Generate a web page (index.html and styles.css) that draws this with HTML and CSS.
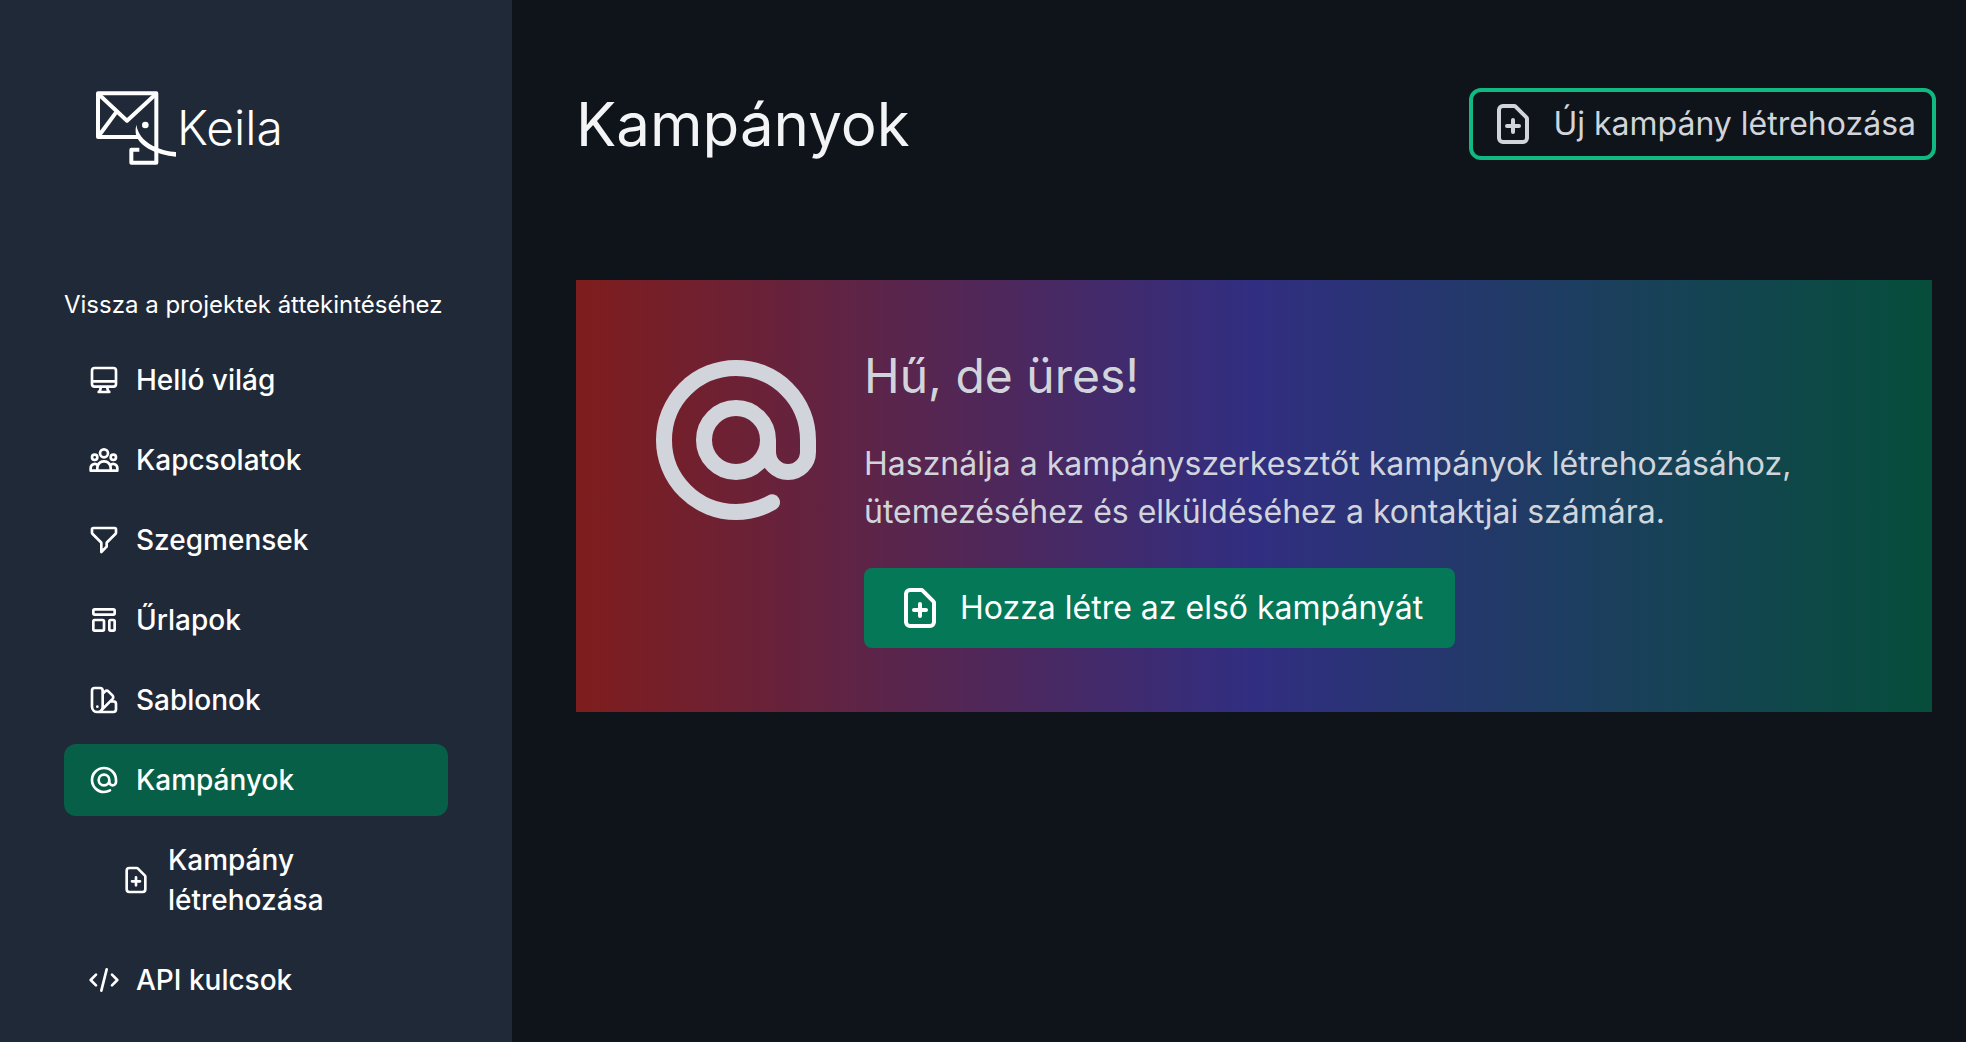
FILE: index.html
```html
<!DOCTYPE html>
<html lang="hu">
<head>
<meta charset="utf-8">
<title>Kampányok – Keila</title>
<link rel="stylesheet" href="styles.css">
</head>
<body>
<svg class="sprite" aria-hidden="true">
  <symbol id="file-plus" viewBox="0 0 24 24"><path d="M9 13h6m-3-3v6m5 5H7a2 2 0 0 1-2-2V5a2 2 0 0 1 2-2h5.586a1 1 0 0 1 .707.293l5.414 5.414a1 1 0 0 1 .293.707V19a2 2 0 0 1-2 2z"/></symbol>
  <symbol id="at" viewBox="0 0 24 24"><path d="M16 12a4 4 0 1 0-8 0 4 4 0 0 0 8 0zm0 0v1.5a2.5 2.5 0 0 0 5 0V12a9 9 0 1 0-9 9c1.6 0 3.15-.42 4.5-1.206"/></symbol>
</svg>
<div class="app">
  <aside class="sidebar">
    <a class="logo" href="#">
      <svg class="logo-mark" viewBox="105 60 246 228" aria-hidden="true">
        <g fill="none" stroke="currentColor" stroke-width="12" stroke-linejoin="round">
          <path d="M238 201H114V70H289V278H214V239H238"/>
          <path d="M116 73L201 152L287 73M170 125L116 198"/>
        </g>
        <circle cx="256" cy="165" r="10" fill="currentColor"/>
        <path fill="currentColor" d="M229 164C233 190 250 212 278 227C300 239 325 244 348 246V260C318 257 289 249 265 236C238 219 220 199 229 164Z"/>
      </svg>
      <span>Keila</span>
    </a>
    <nav class="nav">
      <a class="back" href="#">Vissza a projektek áttekintéséhez</a>
      <ul class="menu">
        <li><a class="item" href="#"><svg class="icon" viewBox="0 0 24 24"><path d="M9.75 17L9 20l-1 1h8l-1-1-.75-3M3 13h18M5 17h14a2 2 0 0 0 2-2V5a2 2 0 0 0-2-2H5a2 2 0 0 0-2 2v10a2 2 0 0 0 2 2z"/></svg>Helló világ</a></li>
        <li><a class="item" href="#"><svg class="icon" viewBox="0 0 24 24"><path d="M17 20h5v-2a3 3 0 0 0-5.356-1.857M17 20H7m10 0v-2c0-.656-.126-1.283-.356-1.857M7 20H2v-2a3 3 0 0 1 5.356-1.857M7 20v-2c0-.656.126-1.283.356-1.857m0 0a5.002 5.002 0 0 1 9.288 0M15 7a3 3 0 1 1-6 0 3 3 0 0 1 6 0zm6 3a2 2 0 1 1-4 0 2 2 0 0 1 4 0zM7 10a2 2 0 1 1-4 0 2 2 0 0 1 4 0z"/></svg>Kapcsolatok</a></li>
        <li><a class="item" href="#"><svg class="icon" viewBox="0 0 24 24"><path d="M3 4a1 1 0 0 1 1-1h16a1 1 0 0 1 1 1v2.586a1 1 0 0 1-.293.707l-6.414 6.414a1 1 0 0 0-.293.707V17l-4 4v-6.586a1 1 0 0 0-.293-.707L3.293 7.293A1 1 0 0 1 3 6.586V4z"/></svg>Szegmensek</a></li>
        <li><a class="item" href="#"><svg class="icon" viewBox="0 0 24 24"><path d="M4 5a1 1 0 0 1 1-1h14a1 1 0 0 1 1 1v2a1 1 0 0 1-1 1H5a1 1 0 0 1-1-1zM4 13a1 1 0 0 1 1-1h6a1 1 0 0 1 1 1v6a1 1 0 0 1-1 1H5a1 1 0 0 1-1-1zM16 13a1 1 0 0 1 1-1h2a1 1 0 0 1 1 1v6a1 1 0 0 1-1 1h-2a1 1 0 0 1-1-1z"/></svg>Űrlapok</a></li>
        <li><a class="item" href="#"><svg class="icon" viewBox="0 0 24 24"><path d="M7 21a4 4 0 0 1-4-4V5a2 2 0 0 1 2-2h4a2 2 0 0 1 2 2v12a4 4 0 0 1-4 4zm0 0h12a2 2 0 0 0 2-2v-4a2 2 0 0 0-2-2h-2.343M11 7.343l1.657-1.657a2 2 0 0 1 2.828 0l2.829 2.828a2 2 0 0 1 0 2.829l-8.486 8.485M7 17h.01"/></svg>Sablonok</a></li>
        <li><a class="item active" href="#" aria-current="page"><svg class="icon"><use href="#at"/></svg>Kampányok</a>
          <ul class="menu submenu">
            <li><a class="item" href="#"><svg class="icon"><use href="#file-plus"/></svg>Kampány létrehozása</a></li>
          </ul>
        </li>
        <li><a class="item" href="#"><svg class="icon" viewBox="0 0 24 24"><path d="M10 20l4-16m4 4l4 4-4 4M6 16l-4-4 4-4"/></svg>API kulcsok</a></li>
      </ul>
    </nav>
  </aside>
  <main class="main">
    <header class="header">
      <h1>Kampányok</h1>
      <button class="btn outline" type="button"><svg class="icon"><use href="#file-plus"/></svg>Új kampány létrehozása</button>
    </header>
    <section class="empty">
      <svg class="empty-icon"><use href="#at"/></svg>
      <div class="empty-body">
        <h2>Hű, de üres!</h2>
        <p>Használja a kampányszerkesztőt kampányok létrehozásához, ütemezéséhez és elküldéséhez a kontaktjai számára.</p>
        <button class="btn primary" type="button"><svg class="icon"><use href="#file-plus"/></svg>Hozza létre az első kampányát</button>
      </div>
    </section>
  </main>
</div>
</body>
</html>
```
FILE: styles.css
```css
* { box-sizing: border-box; margin: 0; padding: 0; }
body {
  background: #0f131a;
  color: #f3f4f6;
  font-family: Inter, "Liberation Sans", sans-serif;
}
a { color: inherit; text-decoration: none; }
ul { list-style: none; }
svg {
  flex: none;
  fill: none;
  stroke: currentColor;
  stroke-width: 2;
  stroke-linecap: round;
  stroke-linejoin: round;
}
.sprite { display: none; }
.app { display: flex; min-height: 100vh; }

.sidebar {
  flex: none;
  width: 512px;
  padding: 90px 64px 24px;
  background: #202937;
  color: #fff;
}
.logo {
  display: flex;
  align-items: center;
  padding-left: 31px;
  font-size: 48px;
  line-height: 76px;
  font-weight: 300;
}
.logo-mark { width: 82px; height: 76px; stroke: none; stroke-linecap: butt; }
.nav { margin-top: 122px; }
.back { display: block; font-size: 24px; line-height: 34px; }
.menu { display: flex; flex-direction: column; gap: 8px; }
.back + .menu { margin-top: 22px; }
.submenu { padding: 8px 64px 0 32px; }
.item {
  display: flex;
  align-items: center;
  gap: 16px;
  padding: 16px 24px;
  border-radius: 12px;
  font-size: 28px;
  line-height: 40px;
  font-weight: 500;
}
.item .icon { width: 32px; height: 32px; }
.active { background: #065f46; }

.main { flex: 1; padding: 88px 34px 64px 64px; }
.header {
  display: flex;
  align-items: center;
  justify-content: space-between;
  margin-right: -4px;
}
h1 { font-size: 60px; line-height: 72px; font-weight: 400; }
.btn {
  display: inline-flex;
  align-items: center;
  gap: 16px;
  border: 0;
  font: inherit;
  font-size: 32px;
  line-height: 48px;
  cursor: pointer;
}
.btn .icon { width: 48px; height: 48px; }
.outline {
  padding: 8px 16px;
  border: 4px solid #10b981;
  border-radius: 12px;
  background: transparent;
  color: #d1d5db;
}
.primary {
  margin-top: 32px;
  padding: 16px 32px;
  border-radius: 8px;
  background: #047857;
  color: #fff;
}
.empty {
  display: flex;
  gap: 32px;
  margin-top: 120px;
  padding: 64px;
  background: linear-gradient(to right, #7f1d1d, #312e81, #064e3b);
  color: #d1d5db;
}
.empty-icon { width: 192px; height: 192px; }
.empty-body { min-width: 0; }
h2 { font-size: 48px; line-height: 64px; font-weight: 400; }
.empty p { margin-top: 32px; font-size: 32px; line-height: 48px; }
```
